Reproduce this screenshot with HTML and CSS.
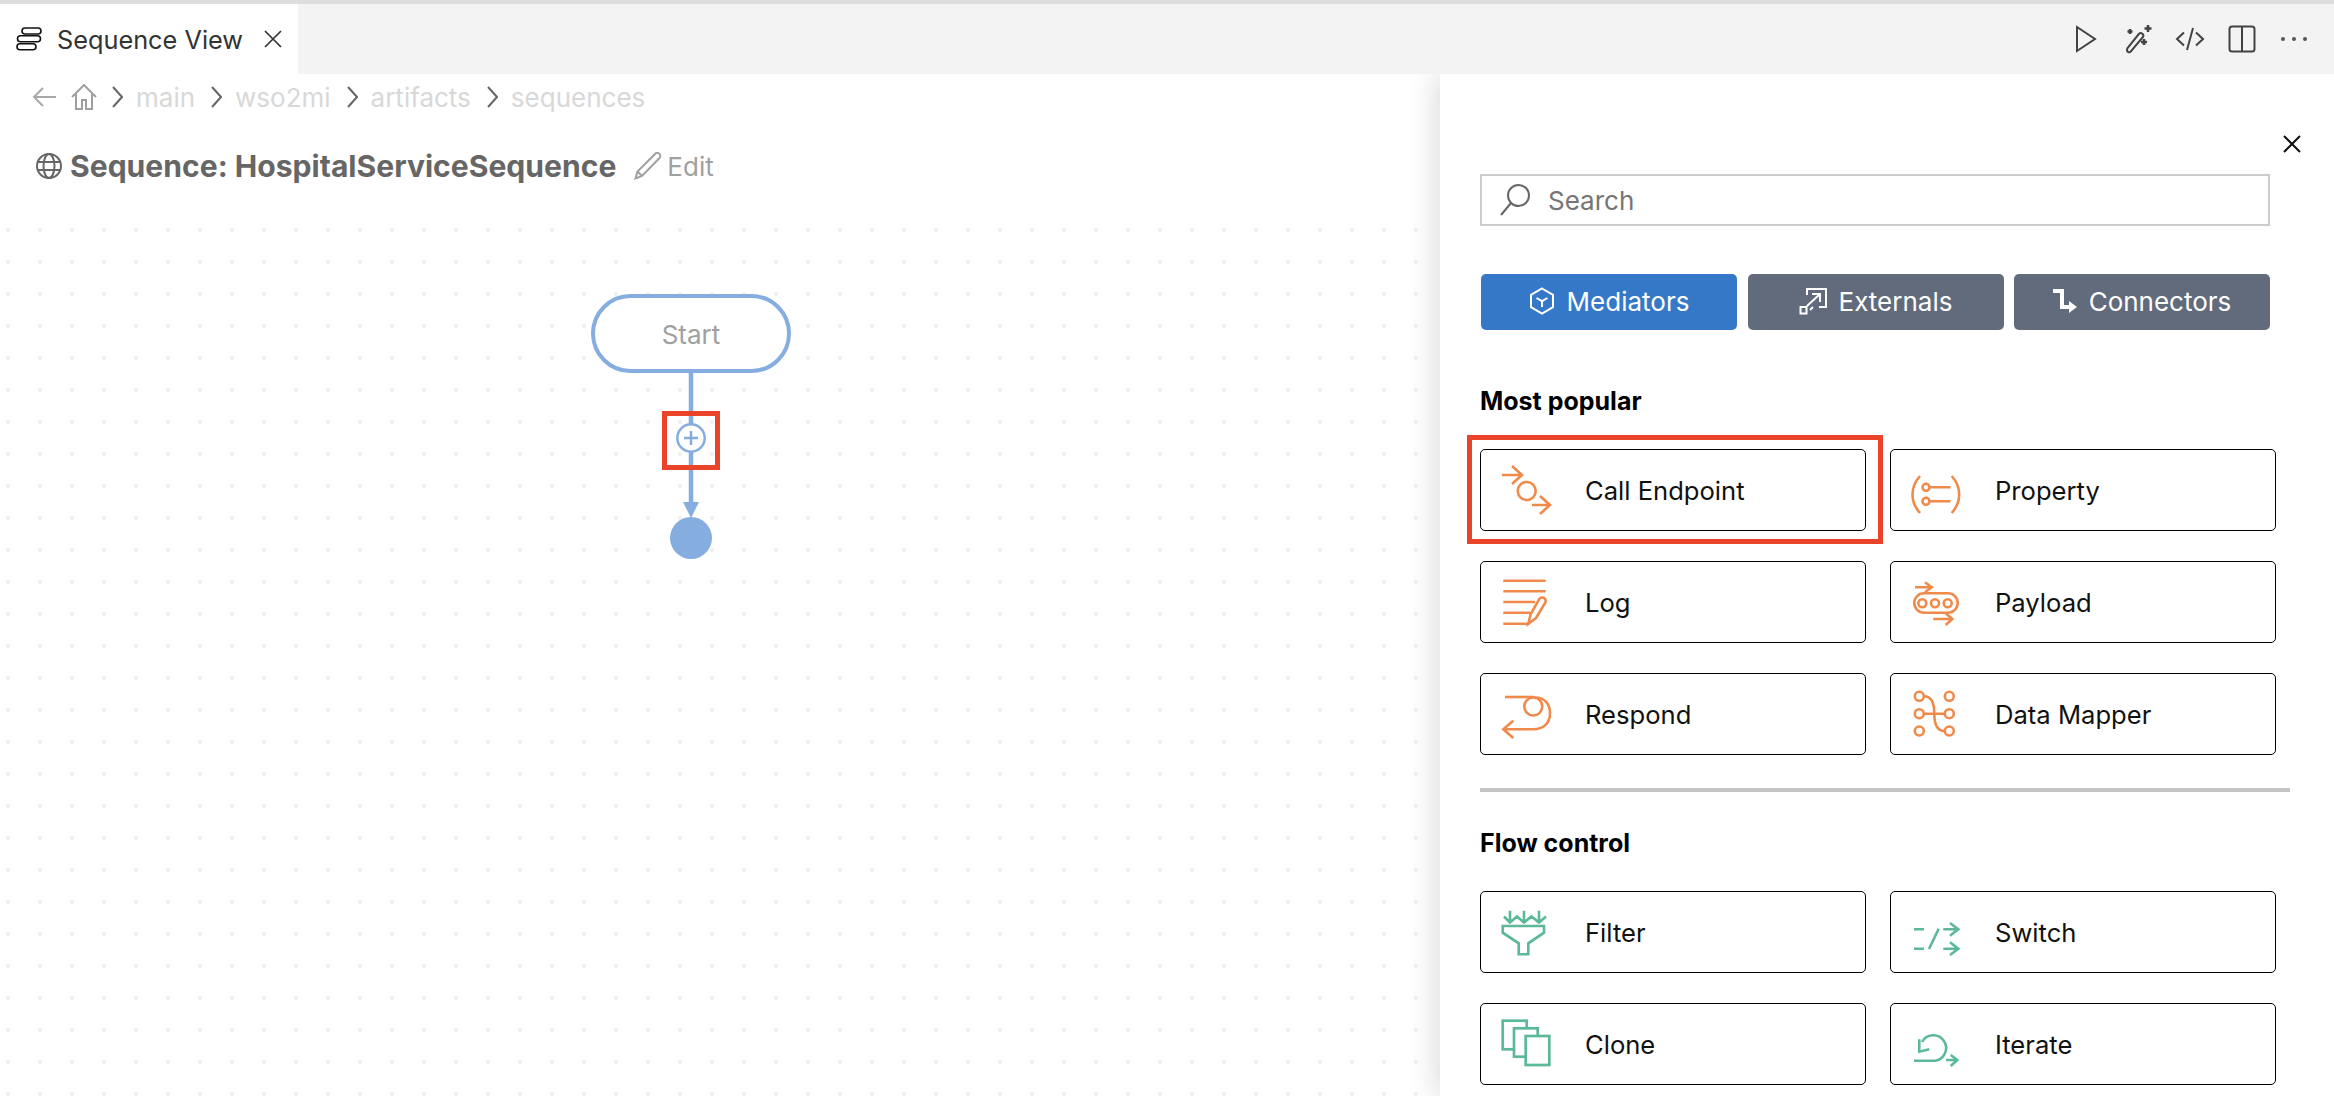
FILE: index.html
```html
<!DOCTYPE html>
<html lang="en">
<head>
    <meta charset="UTF-8">
    <meta name="viewport" content="width=device-width, initial-scale=1.0">
    <title>Sequence View</title>
    <link rel="stylesheet" href="styles.css">
</head>
<body>
    <div class="tabbar">
        <div class="tab">
            <svg class="tab-icon" viewBox="0 0 26 24" width="26" height="24">
                <rect x="6" y="1" width="19" height="6" rx="3"/>
                <rect x="1.500" y="8.800" width="23" height="6" rx="3"/>
                <rect x="1" y="16.800" width="19" height="6" rx="3"/>
            </svg>
            <span class="tab-title">Sequence View</span>
            <svg class="tab-close" viewBox="0 0 18 18" width="18" height="18"><path d="M1 1l16 16M17 1L1 17"/></svg>
        </div>
        <div class="tab-actions">
            <svg viewBox="0 0 30 30" width="30" height="30"><path d="M6 3l18 12L6 27z"/></svg>
            <svg viewBox="0 0 30 30" width="30" height="30">
                <path d="M4 26.5a2.3 2.3 0 0 0 3.4 1.5L20 13a2.6 2.6 0 0 0-4-3.2L4.300 24.500z"/>
                <path d="M7 5v5M4.500 7.500h5M25 1v7M21.500 4.500h7M21 15v6M18 18h6" class="thick"/>
            </svg>
            <svg viewBox="0 0 30 30" width="30" height="30"><path d="M9 8.500l-7 6.500 7 6.500M21 8.500l7 6.500-7 6.500M18 4l-6 22"/></svg>
            <svg viewBox="0 0 30 30" width="30" height="30"><rect x="2.500" y="2.500" width="25" height="25" rx="2.500"/><path d="M15 2.500v25"/></svg>
            <div class="dots"><i></i><i></i><i></i></div>
        </div>
    </div>

    <div class="main">
        <div class="editor">
            <div class="breadcrumbs">
                <svg class="crumb-back" viewBox="0 0 24 20" width="24" height="20"><path d="M24 10H2M11 1l-9 9 9 9"/></svg>
                <svg class="crumb-home" viewBox="0 0 26 26" width="26" height="26"><path d="M1 13L13 1l12 12M5 10v15h6v-9h4v9h6V10"/></svg>
                <svg class="chevron" viewBox="0 0 11 22" width="11" height="22"><path d="M1 1l9 10-9 10"/></svg>
                <span>main</span>
                <svg class="chevron" viewBox="0 0 11 22" width="11" height="22"><path d="M1 1l9 10-9 10"/></svg>
                <span>wso2mi</span>
                <svg class="chevron" viewBox="0 0 11 22" width="11" height="22"><path d="M1 1l9 10-9 10"/></svg>
                <span>artifacts</span>
                <svg class="chevron" viewBox="0 0 11 22" width="11" height="22"><path d="M1 1l9 10-9 10"/></svg>
                <span>sequences</span>
            </div>
            <div class="title-row">
                <svg class="globe" viewBox="0 0 26 26" width="26" height="26">
                    <circle cx="13" cy="13" r="12"/>
                    <ellipse cx="13" cy="13" rx="5.500" ry="12"/>
                    <path d="M1.500 9h23M1.500 17h23"/>
                </svg>
                <h1>Sequence: HospitalServiceSequence</h1>
                <svg class="pencil" viewBox="0 0 28 28" width="28" height="28"><path d="M1.500 26.500l2-7L21 2a2.800 2.800 0 0 1 4.500 4L8 24z"/><path d="M3.500 19.500L8 24"/></svg>
                <span class="edit">Edit</span>
            </div>

            <div class="canvas">
                <svg class="edges" viewBox="0 0 60 190" width="60" height="190">
                    <path d="M30 0v130" class="edge"/>
                    <path d="M22 129h16l-8 16z" class="arrow"/>
                    <circle cx="30" cy="65" r="13.700" class="plus"/>
                    <path d="M30 58v14M23 65h14" class="plus-mark"/>
                    <circle cx="30" cy="165" r="21" class="arrow"/>
                </svg>
                <div class="start-node">Start</div>
                <div class="plus-highlight"></div>
            </div>
        </div>

        <div class="panel">
            <div class="panel-top">
                <svg viewBox="0 0 18 18" width="18" height="18"><path d="M1 1l16 16M17 1L1 17"/></svg>
            </div>
            <div class="search">
                <svg viewBox="0 0 30 32" width="30" height="32"><circle cx="18.500" cy="11.500" r="10.500"/><path d="M11 19L1 31"/></svg>
                <span>Search</span>
            </div>
            <div class="tabs">
                <button class="active">
                    <svg viewBox="0 0 26 28" width="26" height="28"><path d="M13 1.500l11 6.300v12.400l-11 6.300-11-6.300V7.800z"/><path d="M7.500 11l5.500 3.200 5.500-3.200M13 14.200V20"/></svg>
                    Mediators
                </button>
                <button>
                    <svg viewBox="0 0 28 28" width="28" height="28"><path d="M8 8V2h19v18h-7M1.500 20h6v6.500h-6zM8 19L21 7M13 7h8v8M14 20l-3 3"/></svg>
                    Externals
                </button>
                <button>
                    <svg class="connector" viewBox="0 0 24 24" width="24" height="24"><path d="M0 0h11v16h5v-4l8 6-8 6v-4H7V4H0z"/></svg>
                    Connectors
                </button>
            </div>

            <h3 class="first">Most popular</h3>
            <div class="cards">
                <div class="card marked">
                    <svg class="orange" viewBox="0 0 52 50" width="52" height="50">
                        <path d="M2 10h20M12 1l10 9-10 9"/>
                        <circle cx="26.700" cy="26" r="9"/>
                        <path d="M32 40h18M40 31l10 9-10 9"/>
                    </svg>
                    <span>Call Endpoint</span>
                    <div class="mark"></div>
                </div>
                <div class="card">
                    <svg class="orange" viewBox="0 0 52 50" width="52" height="50">
                        <path d="M10 11c-10 11-10 26 0 37M41.700 11c10 11 10 26 0 37"/>
                        <circle cx="16" cy="22.300" r="3.500"/>
                        <circle cx="16" cy="36.300" r="3.500"/>
                        <path d="M19.500 22.300h21M19.500 36.300h21"/>
                    </svg>
                    <span>Property</span>
                </div>
                <div class="card">
                    <svg class="orange" viewBox="0 0 52 50" width="52" height="50">
                        <path d="M3.300 3.700h42.400M3.300 14.300h42.400M3.300 25H35M3.300 35.700h27.400M3.300 46.700h25"/>
                        <path d="M28.300 46.700l2.200-9L39 22.500a3.300 3.300 0 0 1 6.400 3L36 41z"/>
                    </svg>
                    <span>Log</span>
                </div>
                <div class="card">
                    <svg class="orange" viewBox="0 0 52 50" width="52" height="50">
                        <path d="M5 10.300h16.700M15 5.300l6.700 5-6.700 5"/>
                        <rect x="4.300" y="16.300" width="43.400" height="19.400" rx="9.700"/>
                        <circle cx="12.300" cy="26.300" r="4"/>
                        <circle cx="25" cy="26.300" r="4"/>
                        <circle cx="37.700" cy="26.300" r="4"/>
                        <path d="M23.300 42h19M35.700 36.300l6.600 5.700-6.600 6"/>
                    </svg>
                    <span>Payload</span>
                </div>
                <div class="card">
                    <svg class="orange" viewBox="0 0 52 50" width="52" height="50">
                        <path d="M34 8h-29"/>
                        <circle cx="33.300" cy="17.500" r="9"/>
                        <path d="M33.300 8.500C44 8 50 14 50 24.300s-7 16-16.700 16H3.500M13.300 31.700l-10 8.600 10 8.700"/>
                    </svg>
                    <span>Respond</span>
                </div>
                <div class="card">
                    <svg class="orange" viewBox="0 0 52 50" width="52" height="50">
                        <circle cx="9.300" cy="7.300" r="4.500"/>
                        <circle cx="39.300" cy="7.300" r="4.500"/>
                        <circle cx="9.300" cy="24.700" r="4.500"/>
                        <circle cx="39.300" cy="24.700" r="4.500"/>
                        <circle cx="9.300" cy="42" r="4.500"/>
                        <circle cx="39.300" cy="42" r="4.500"/>
                        <path d="M14 24.700h21M14 7.300c7 0 10.300 5 10.300 17.400S27.700 42 34.700 42"/>
                    </svg>
                    <span>Data Mapper</span>
                </div>
            </div>

            <div class="divider"></div>

            <h3>Flow control</h3>
            <div class="cards">
                <div class="card">
                    <svg class="green" viewBox="0 0 52 50" width="52" height="50">
                        <path d="M4 9.500l6 6 7-6 7 6 7.500-6 7.500 6 7-6M10 3.700v11.800M24 3.700v11.800M39 3.700v11.800"/>
                        <path d="M2.700 19H44v6.700L28.300 36.300v11h-9.600v-11L2.700 25.700z"/>
                    </svg>
                    <span>Filter</span>
                </div>
                <div class="card">
                    <svg class="green" viewBox="0 0 52 50" width="52" height="50">
                        <path d="M4 22.300h10M4 41.700h10M28.700 21.700L19 42M33.300 22.300h15M40 16l8.300 6.300-8.300 6.400M33.300 41.700h15M40 35.300l8.300 6.400-8.300 6.300"/>
                    </svg>
                    <span>Switch</span>
                </div>
                <div class="card">
                    <svg class="green clone" viewBox="0 0 52 50" width="52" height="50">
                        <rect x="2.700" y="1.700" width="24" height="28.600"/>
                        <rect x="14" y="9.300" width="23.700" height="28.400"/>
                        <rect x="25.700" y="17" width="23.600" height="29"/>
                    </svg>
                    <span>Clone</span>
                </div>
                <div class="card">
                    <svg class="green" viewBox="0 0 52 50" width="52" height="50">
                        <path d="M4 41.700h21A12.800 12.800 0 1 0 12 23M9.300 20.300v12.400l10-2.400M36 41h11.300M40.700 36l6.600 5-6.600 6"/>
                    </svg>
                    <span>Iterate</span>
                </div>
            </div>
        </div>
    </div>
</body>
</html>
```

FILE: styles.css
```css
* {
    box-sizing: border-box;
}
body {
    margin: 0;
    height: 1096px;
    overflow: hidden;
    background-color: #fff;
    color: #000;
    font-family: Inter, "Liberation Sans", sans-serif;
    font-size: 26px;
}
svg {
    display: block;
    flex: none;
    fill: none;
    stroke: currentColor;
    stroke-width: 2;
}

/* tab bar */
.tabbar {
    display: flex;
    justify-content: space-between;
    height: 74px;
    background-color: #f3f3f3;
    border-top: 4px solid #ddd;
}
.tab {
    display: flex;
    align-items: center;
    width: 298px;
    padding-left: 16px;
    background-color: #fff;
    color: #333;
}
.tab-icon {
    color: #111;
    stroke-width: 1.600;
}
.tab-title {
    margin-left: 15px;
    font-size: 25.300px;
}
.tab-close {
    margin-left: 21px;
    stroke-width: 1.700;
}
.tab-actions {
    display: flex;
    align-items: center;
    gap: 22px;
    padding-right: 25px;
    color: #424242;
}
.thick {
    stroke-width: 2.500;
}
.dots {
    display: flex;
    justify-content: space-between;
    width: 26px;
    margin: 0 2px;
}
.dots i {
    width: 4px;
    height: 4px;
    border-radius: 50%;
    background-color: #555;
}

/* editor side */
.main {
    display: flex;
    height: 1022px;
    overflow: hidden;
}
.editor {
    width: 1440px;
}
.breadcrumbs {
    display: flex;
    align-items: center;
    height: 46px;
    padding-left: 32px;
    color: #d8d8d8;
}
.crumb-back {
    color: #a8a8a8;
}
.crumb-home {
    margin-left: 15px;
    margin-right: 15px;
    color: #a0a0a0;
}
.chevron {
    margin-right: 13px;
    color: #666;
}
.breadcrumbs span {
    margin-right: 16px;
}
.title-row {
    display: flex;
    align-items: center;
    height: 52px;
    margin-top: 20px;
    padding-left: 36px;
}
.globe {
    color: #666;
}
h1 {
    margin: 0 18px 0 8px;
    color: #666;
    font-size: 30.100px;
    font-weight: 700;
}
.pencil {
    color: #a0a0a0;
}
.edit {
    margin-left: 5px;
    color: #a0a0a0;
}

/* diagram, offsets are the place of each node on the canvas */
.canvas {
    position: relative;
    height: 882px;
    margin-top: 22px;
    background-image: radial-gradient(circle, #eff0f4 2px, transparent 2.300px);
    background-size: 32px 32px;
    background-position: 24px 0;
}
.edges {
    position: absolute;
    left: 661px;
    top: 159px;
    stroke: none;
}
.edge {
    stroke: #85ade0;
    stroke-width: 4.500;
}
.arrow {
    fill: #85ade0;
}
.plus {
    fill: #fff;
    stroke: #85ade0;
    stroke-width: 2.500;
}
.plus-mark {
    stroke: #85ade0;
    stroke-width: 2.500;
}
.start-node {
    position: absolute;
    left: 591px;
    top: 80px;
    display: flex;
    align-items: center;
    justify-content: center;
    width: 200px;
    height: 79px;
    padding-top: 2px;
    background-color: #fff;
    border: 4px solid #85ade0;
    border-radius: 40px;
    color: #a0a0a0;
}
.plus-highlight {
    position: absolute;
    left: 662px;
    top: 197px;
    width: 58px;
    height: 59px;
    border: 5px solid #e9432a;
}

/* mediator panel */
.panel {
    position: relative;
    width: 894px;
    padding-left: 40px;
    background-color: #fff;
    box-shadow: -6px 0 26px rgba(0, 0, 0, 0.13);
}
.panel-top {
    display: flex;
    justify-content: flex-end;
    height: 79px;
    padding-top: 61px;
    padding-right: 33px;
    color: #111;
}
.search {
    display: flex;
    align-items: center;
    width: 790px;
    height: 52px;
    margin-top: 21px;
    padding-left: 18px;
    border: 2px solid #ccc;
    color: #757575;
}
.search svg {
    color: #666;
}
.search span {
    margin-left: 18px;
}
.tabs {
    display: grid;
    grid-template-columns: repeat(3, 256px);
    gap: 10.500px;
    margin-top: 48px;
    margin-left: 1px;
}
.tabs button {
    display: flex;
    align-items: center;
    justify-content: center;
    gap: 12px;
    height: 56px;
    padding: 0 0 2px;
    border: none;
    border-radius: 5px;
    background-color: #616b7b;
    color: #fff;
    font-family: inherit;
    font-size: 26px;
}
.tabs button.active {
    background-color: #3578c7;
}
.tabs .connector {
    fill: #fff;
    stroke: none;
}
h3 {
    margin: 36px 0 33px;
    font-size: 25px;
    font-weight: 700;
    line-height: 30px;
}
h3.first {
    margin-top: 56px;
}
.cards {
    display: grid;
    grid-template-columns: 386px 386px;
    column-gap: 24px;
    row-gap: 30px;
}
.card {
    position: relative;
    display: flex;
    align-items: center;
    height: 82px;
    padding-left: 20px;
    border: 1.500px solid #000;
    border-radius: 5px;
    font-size: 25.600px;
}
.card svg {
    margin-left: -1.500px;
    stroke-width: 2.600;
}
.card span {
    margin-left: 33.500px;
    color: #111;
}
.orange {
    color: #f08a4b;
}
.green {
    color: #5cb89a;
}
.clone rect {
    fill: #fff;
    stroke-width: 2.700;
}
.mark {
    position: absolute;
    inset: -15px -18px -14px -14px;
    border: 5px solid #e9432a;
}
.divider {
    width: 810px;
    height: 4px;
    margin-top: 33px;
    background-color: #c4c4c4;
}
```
